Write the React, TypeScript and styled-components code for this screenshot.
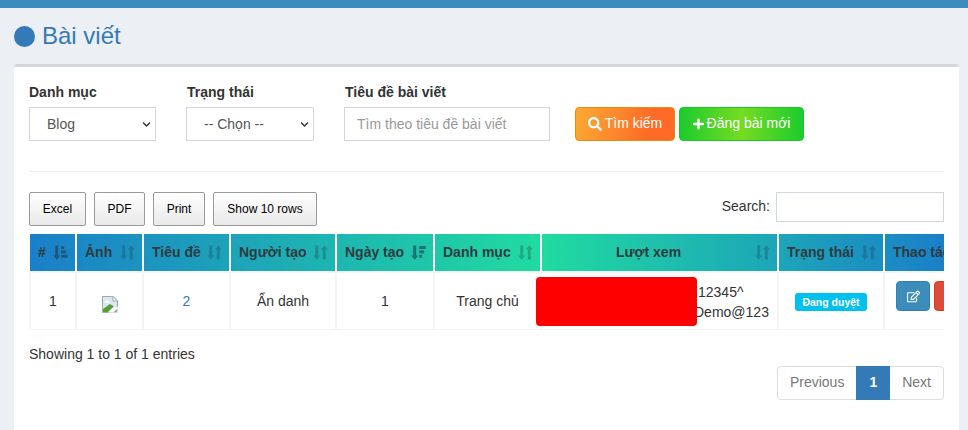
import React from "react";
import styled, { createGlobalStyle } from "styled-components";
import { FaSearch, FaPlus, FaRegEdit, FaTrash, FaChevronDown } from "react-icons/fa";

const Global = createGlobalStyle`
  * { box-sizing: border-box; }
  html, body { margin: 0; padding: 0; background: #ecf0f5; }
  body { font-family: "Liberation Sans", Arial, sans-serif; font-size: 14px; color: #333; line-height: 1.42857; height: 430px; overflow: hidden; }
`;

const TopBar = styled.div`height: 8px; background: #3c8dbc;`;
const Main = styled.main`padding: 0 9px 0 14px;`;
const Title = styled.h1`
  margin: 0; height: 56px; display: flex; align-items: center; gap: 7px;
  font-size: 24px; font-weight: 400; color: #337ab7;
`;
const Dot = styled.span`width: 21px; height: 21px; border-radius: 50%; background: #337ab7;`;
const Box = styled.section`
  background: #fff; border-top: 3px solid #d2d6de; border-radius: 3px 3px 0 0;
  padding: 15px; height: 366px; position: relative;
`;
const FilterRow = styled.form`display: flex; align-items: flex-end; height: 59px;`;
const Field = styled.div<{ $w: number; $mr: number }>`
  width: ${p => p.$w}px; margin-right: ${p => p.$mr}px;
  display: flex; flex-direction: column;
`;
const Label = styled.label<{ $indent?: boolean }>`
  font-weight: 700; font-size: 14px; line-height: 20px; margin-bottom: 5px;
  padding-left: ${p => (p.$indent ? "1px" : "0")};
`;
const SelectBox = styled.div`
  height: 34px; border: 1px solid #d2d6de; display: flex; align-items: center;
  justify-content: space-between; padding: 1px 4px 0 17px; color: #555; font-size: 14px;
  svg { width: 9px; height: 9px; color: #333; }
`;
const TextInput = styled.input`
  height: 34px; width: 100%; border: 1px solid #d2d6de; padding: 0 12px; font: inherit; font-size: 14px; outline: none;
  &::placeholder { color: #999; opacity: 1; }
`;
const ActionButton = styled.button<{ $kind: "search" | "add"; $w: number }>`
  height: 34px; width: ${p => p.$w}px; margin-right: 4px; border-radius: 4px; color: #fff; font: inherit; font-size: 14px; padding: 0;
  display: flex; align-items: center; justify-content: center; gap: 3px;
  border: 1px solid ${p => (p.$kind === "search" ? "#e08e0b" : "#1cc92c")};
  background: ${p => (p.$kind === "search"
    ? "linear-gradient(105deg, #fbab33 0%, #ff6a26 75%)"
    : "linear-gradient(90deg, #1ccb2d 0%, #76dc22 50%, #1ccb2d 100%)")};
  svg { width: ${p => (p.$kind === "search" ? 14 : 11)}px; height: 14px; }
`;
const Rule = styled.hr`border: 0; border-top: 1px solid #eee; margin: 30px 0 20px;`;
const TableTools = styled.div`display: flex; justify-content: space-between; align-items: flex-start; height: 42px;`;
const ExportGroup = styled.div`display: flex; gap: 8px;`;
const ExportButton = styled.button<{ $w: number }>`
  width: ${p => p.$w}px; height: 34px; padding: 0; border: 1px solid #999; border-radius: 2px; color: #000;
  font-family: inherit; font-size: 12px;
  background: linear-gradient(to bottom, #fff 0%, #e9e9e9 100%);
`;
const SearchLabel = styled.label`display: flex; align-items: flex-start; gap: 6px; line-height: 28px;`;
const SearchInput = styled.input`width: 168px; height: 30px; border: 1px solid #d2d6de; outline: none;`;
const TableClip = styled.div`overflow: hidden; position: relative; height: 96px;`;
const Table = styled.table`
  border-collapse: collapse; table-layout: fixed; width: 1030px;
  background: #fff;
`;
const HeadRow = styled.tr`
  background: linear-gradient(90deg, #1a7fc9 0%, #20dba0 49.5%, #1a7fc9 89%, #1a7fc9 100%);
`;
const Th = styled.th<{ $center?: boolean }>`
  height: 38px; padding: 0 30px 0 8px; font-size: 14px; font-weight: 700; color: #2f3b3f; white-space: nowrap;
  text-align: ${p => (p.$center ? "center" : "left")};
  border-left: 2px solid #fff; border-bottom: 2px solid #f4f4f4; position: relative;
  &:first-child { border-left: 0; }
`;
const SortSlot = styled.span<{ $active?: boolean }>`
  position: absolute; right: 7px; top: 11px; width: 15px; height: 15px; display: flex;
  color: rgba(30, 60, 75, ${p => (p.$active ? 0.6 : 0.3)});
  svg { width: 15px; height: 15px; }
`;
const Td = styled.td`
  height: 58px; padding: 2px 8px 0; text-align: center; font-size: 14px; color: #333;
  border-left: 2px solid #f4f4f4; border-bottom: 2px solid #f4f4f4;
`;
const TitleLink = styled.a`color: #337ab7; text-decoration: none;`;
const PassText = styled.div`text-align: left; padding-left: 144px; line-height: 20px; white-space: nowrap;`;
const PassFirst = styled.span`padding-left: 4px;`;
const Redaction = styled.div`
  position: absolute; left: 507px; top: 43px; width: 161px; height: 49px; background: #f00; border-radius: 4px;
`;
const StatusBadge = styled.span`
  display: inline-block; background: #00c0ef; color: #fff; font-size: 10.5px; font-weight: 700;
  line-height: 12px; padding: 3px 7px; border-radius: 3px; white-space: nowrap;
`;
const RowActions = styled.div`display: flex; gap: 4px; margin: 0 0 12px 3px;`;
const IconButton = styled.span<{ $bg: string; $bd: string }>`
  width: 34px; height: 30px; flex: none; border-radius: 4px; background: ${p => p.$bg}; border: 1px solid ${p => p.$bd};
  color: #fff; display: flex; align-items: center; justify-content: center;
  svg { width: 13px; height: 13px; }
`;
const ImageIcon = styled.svg`display: inline-block; vertical-align: middle; margin-top: 5px;`;
const Footer = styled.div`margin-top: 14px; line-height: 20px;`;
const PagerRow = styled.nav`display: flex; justify-content: flex-end; margin-top: 2px;`;
const PageItem = styled.span<{ $active?: boolean; $edge?: "l" | "r" }>`
  height: 34px; padding: 0 12px; display: flex; align-items: center; font-size: 14px;
  border: 1px solid ${p => (p.$active ? "#337ab7" : "#ddd")};
  margin-left: ${p => (p.$active || p.$edge === "r" ? "-1px" : "0")};
  background: ${p => (p.$active ? "#337ab7" : "#fff")};
  color: ${p => (p.$active ? "#fff" : "#777")};
  font-weight: ${p => (p.$active ? 700 : 400)};
  position: relative; z-index: ${p => (p.$active ? 1 : 0)};
  border-radius: ${p => (p.$edge === "l" ? "4px 0 0 4px" : p.$edge === "r" ? "0 4px 4px 0" : "0")};
`;

const SortArrows = () => (
  <svg viewBox="0 0 15 15" fill="currentColor" aria-hidden="true">
    <path d="M2.2 0.5h3v10h2L3.7 14.8 0.2 10.5h2zM9.8 14.5h3v-10h2L11.3 0.2 7.8 4.5h2z" />
  </svg>
);

const SortBars = ({ ascending }: { ascending: boolean }) => {
  const bars = ascending ? [3, 5, 6.5] : [6.5, 5, 3];
  return (
    <svg viewBox="0 0 15 15" fill="currentColor" aria-hidden="true">
      <path d="M2.2 0.5h3v10h2L3.7 14.8 0.2 10.5h2z" />
      {bars.map((w, i) => <rect key={i} x="8.2" y={1 + i * 4.4} width={w} height="3" />)}
    </svg>
  );
};

const BrokenImage = () => (
  <ImageIcon width="16" height="17" viewBox="0 0 16 17" aria-label="broken image">
    <path d="M0.5 0.5h10.5l4.5 4.5v8l-3 3.5h-12z" fill="#dbe6f4" stroke="#a3a8ad" />
    <path d="M11 0.5v4.5h4.5z" fill="#fff" stroke="#a3a8ad" />
    <path d="M3 5.5c1-1.5 3-1.5 4 0h1v1.2H2.5z" fill="#fff" />
    <path d="M1 16v-3l7-5 4 2.5-6 5.5z" fill="#54a033" />
    <path d="M6 16.5l6-6 4 1v5.5z" fill="#fff" />
    <path d="M11 16.5l4.5-4v4z" fill="#a3a8ad" />
  </ImageIcon>
);

const widths = [46, 67, 87, 106, 98, 107, 237, 106, 176];

export default function App() {
  return (
    <>
      <Global />
      <TopBar />
      <Main>
        <Title><Dot />Bài viết</Title>
        <Box>
          <FilterRow>
            <Field $w={127} $mr={30}>
              <Label>Danh mục</Label>
              <SelectBox>Blog<FaChevronDown /></SelectBox>
            </Field>
            <Field $w={128} $mr={30}>
              <Label $indent>Trạng thái</Label>
              <SelectBox>-- Chọn --<FaChevronDown /></SelectBox>
            </Field>
            <Field $w={206} $mr={25}>
              <Label $indent>Tiêu đề bài viết</Label>
              <TextInput placeholder="Tìm theo tiêu đề bài viết" />
            </Field>
            <ActionButton type="button" $kind="search" $w={100}><FaSearch />Tìm kiếm</ActionButton>
            <ActionButton type="button" $kind="add" $w={125}><FaPlus />Đăng bài mới</ActionButton>
          </FilterRow>
          <Rule />
          <TableTools>
            <ExportGroup>
              <ExportButton $w={57}>Excel</ExportButton>
              <ExportButton $w={51}>PDF</ExportButton>
              <ExportButton $w={52}>Print</ExportButton>
              <ExportButton $w={104}>Show 10 rows</ExportButton>
            </ExportGroup>
            <SearchLabel>Search:<SearchInput /></SearchLabel>
          </TableTools>
          <TableClip>
            <Table>
              <colgroup>
                {widths.map((w, i) => <col key={i} style={{ width: w }} />)}
              </colgroup>
              <thead>
                <HeadRow>
                  <Th>#<SortSlot $active><SortBars ascending /></SortSlot></Th>
                  <Th>Ảnh<SortSlot><SortArrows /></SortSlot></Th>
                  <Th>Tiêu đề<SortSlot><SortArrows /></SortSlot></Th>
                  <Th>Người tạo<SortSlot><SortArrows /></SortSlot></Th>
                  <Th>Ngày tạo<SortSlot $active><SortBars ascending={false} /></SortSlot></Th>
                  <Th>Danh mục<SortSlot><SortArrows /></SortSlot></Th>
                  <Th $center>Lượt xem<SortSlot><SortArrows /></SortSlot></Th>
                  <Th>Trạng thái<SortSlot><SortArrows /></SortSlot></Th>
                  <Th>Thao tác</Th>
                </HeadRow>
              </thead>
              <tbody>
                <tr>
                  <Td>1</Td>
                  <Td><BrokenImage /></Td>
                  <Td><TitleLink href="#">2</TitleLink></Td>
                  <Td>Ẩn danh</Td>
                  <Td>1</Td>
                  <Td>Trang chủ</Td>
                  <Td><PassText><PassFirst>12345^</PassFirst><br />Demo@123</PassText></Td>
                  <Td><StatusBadge>Đang duyệt</StatusBadge></Td>
                  <Td>
                    <RowActions>
                      <IconButton $bg="#3c8dbc" $bd="#367fa9"><FaRegEdit /></IconButton>
                      <IconButton $bg="#dd4b39" $bd="#d73925"><FaTrash /></IconButton>
                    </RowActions>
                  </Td>
                </tr>
              </tbody>
            </Table>
            <Redaction />
          </TableClip>
          <Footer>Showing 1 to 1 of 1 entries</Footer>
          <PagerRow>
            <PageItem $edge="l">Previous</PageItem>
            <PageItem $active>1</PageItem>
            <PageItem $edge="r">Next</PageItem>
          </PagerRow>
        </Box>
      </Main>
    </>
  );
}
